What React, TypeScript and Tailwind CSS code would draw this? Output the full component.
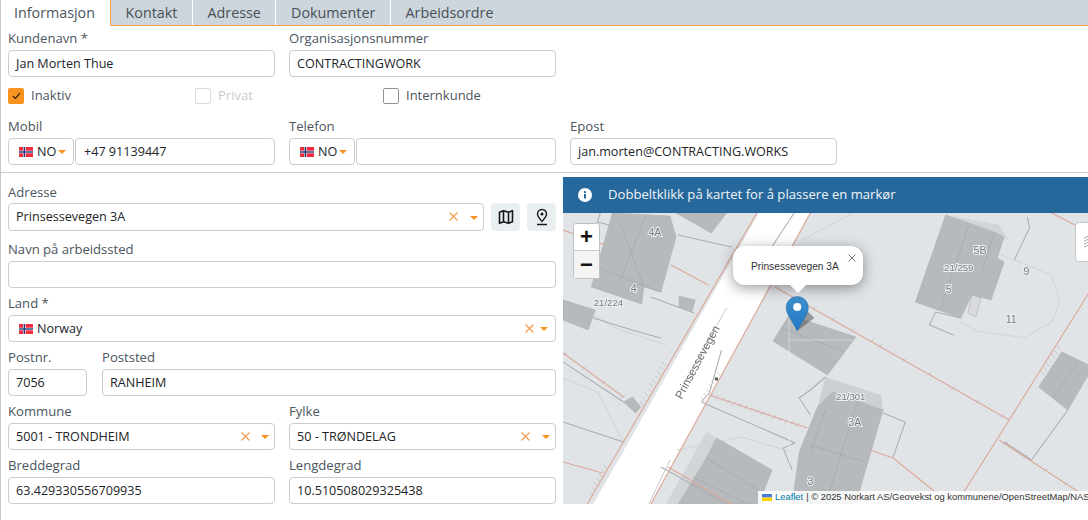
import type { ReactNode } from 'react';

const TABS = ['Kontakt', 'Adresse', 'Dokumenter', 'Arbeidsordre'];

function Flag() {
  return (
    <svg width="14" height="10" viewBox="0 0 14 10" className="shrink-0">
      <rect width="14" height="10" fill="#ef2b3d" />
      <rect x="4" width="2.600" height="10" fill="#fff" />
      <rect y="3.700" width="14" height="2.600" fill="#fff" />
      <rect x="4.600" width="1.400" height="10" fill="#1f3a7a" />
      <rect y="4.300" width="14" height="1.400" fill="#1f3a7a" />
    </svg>
  );
}

function Caret() {
  return <span className="block w-0 h-0 border-x-[4px] border-x-transparent border-t-[4px] border-t-[#f7931e]" />;
}

function Clear() {
  return (
    <svg width="9" height="9" viewBox="0 0 9 9" className="shrink-0 -mt-[2px]" stroke="#f59a4a" strokeWidth="1.100" fill="none">
      <path d="M.5.5l8 8M8.500.5l-8 8" />
    </svg>
  );
}

function Label({ children, first, className = 'pb-[3px]' }: { children: ReactNode; first?: boolean; className?: string }) {
  return (
    <div className={`${first ? 'h-6' : 'h-[27px]'} flex items-end text-[13.1px] leading-[18px] text-[#4a5560] ${className}`}>
      {children}
    </div>
  );
}

function Box({ children, className = '' }: { children?: ReactNode; className?: string }) {
  return (
    <div className={`h-[27px] flex items-center pl-[7px] pr-[5px] pt-px bg-white border border-[#ccc] rounded text-[12.6px] text-[#212529] ${className}`}>
      {children}
    </div>
  );
}

function Select({ value, flag, caretClass, className = '' }: { value: string; flag?: boolean; caretClass: string; className?: string }) {
  return (
    <Box className={`${flag ? '!pl-[10px]' : ''} ${className}`}>
      {flag && <Flag />}
      <span className={`flex-1 ${flag ? 'ml-1' : ''}`}>{value}</span>
      <Clear />
      <span className={caretClass}>
        <Caret />
      </span>
    </Box>
  );
}

function Phone({ value }: { value?: string }) {
  return (
    <div className="flex gap-px">
      <div className="w-[66px] h-[27px] flex items-center pl-[10px] pt-px bg-white border border-[#ccc] rounded text-[12.6px] text-[#212529]">
        <Flag />
        <span className="ml-1">NO</span>
        <span className="ml-[2px]">
          <Caret />
        </span>
      </div>
      <Box className="flex-1 !pl-2">{value}</Box>
    </div>
  );
}

function Check({ checked, disabled, label, className = '' }: { checked?: boolean; disabled?: boolean; label: string; className?: string }) {
  return (
    <div className={`flex items-center ${className}`}>
      {checked ? (
        <span className="w-4 h-4 rounded-[2px] bg-[#f7931e] flex items-center justify-center">
          <svg width="9" height="8" viewBox="0 0 9 8" fill="none" stroke="#2a1c08" strokeWidth="1.200">
            <path d="M1 4.200l2.300 2.300L8 1.200" />
          </svg>
        </span>
      ) : (
        <span className={`w-4 h-4 rounded-[2px] border bg-white ${disabled ? 'border-[#d8dcdf]' : 'border-[#8d959c]'}`} />
      )}
      <span className={`ml-[7px] text-[13px] ${disabled ? 'text-[#c5cacf]' : 'text-[#4a5560]'}`}>{label}</span>
    </div>
  );
}

// små tverrstreker langs eiendomsgrenser
function ticks(x1: number, y1: number, x2: number, y2: number, step = 6) {
  const len = Math.hypot(x2 - x1, y2 - y1);
  const ux = (x2 - x1) / len;
  const uy = (y2 - y1) / len;
  let d = '';
  for (let s = 2; s < len; s += step) {
    const x = x1 + ux * s;
    const y = y1 + uy * s;
    d += `M${(x - uy * 2.5 - ux).toFixed(1)} ${(y + ux * 2.5 - uy).toFixed(1)}L${(x + uy * 2.5 + ux).toFixed(1)} ${(y - ux * 2.5 + uy).toFixed(1)}`;
  }
  return d;
}

const BUILDINGS = [
  '612,213 669,216 675,237 660,292 643,287 641,304 591,287',
  '563,300 595,310 588,330 563,320',
  '678,296 694,300 691,311 678,307',
  '675,213 725,213 710,233',
  '942,215 990,232 1000,237 993,258 1000,262 987,300 968,295 957,318 912,302',
  '771,341 787,315 853,337 825,375',
  '815,407 830,392 880,410 853,504 790,504 797,452',
  '715,438 770,470 757,504 677,504 693,478 705,458',
  '1057,352 1088,367 1063,410 1034,387',
  '623,402 632,397 640,407 635,413',
];

const ORANGE = [
  'M755 213L587 504',
  'M808 213L650 504',
  'M773 287L1005 420',
  'M1047 213L1095 238',
  'M1005 420L1095 275',
  'M1005 420L960 492',
  'M995 440L1063 485L1095 505',
  'M708 395L805 428',
  'M867 450L890 458L933 493',
  'M563 353L623 397',
  'M563 462L602 473',
  'M667 467L760 522',
  'M563 230L605 245',
  'M670 265L707 285',
];

const GRAY = [
  'M677 235L730 247',
  'M650 297L693 313',
  'M593 318L638 332L660 338',
  'M563 362L623 402',
  'M563 422L623 442',
  'M700 402L793 443',
  'M1010 260L1025 228L1023 217',
  'M880 413L902 422L890 457',
  'M1000 442L1027 460L1063 410',
  'M793 443L781 448L790 470',
  'M823 377L808 390L797 398L808 415',
  'M600 213L597 222L612 226',
  'M660 467L740 512',
  'M720 350L708 393L700 402',
  'M792 213L760 262',
  'M957 318L932 312L926 325L950 335',
];

const PALE = [
  'M563 378L597 392L623 442',
  'M993 253L1047 275L1055 302L1047 322L1020 338L973 331L957 322',
  'M563 300L620 330L665 345',
  'M676 450L740 437L790 452',
  'M800 240L850 213',
];

const LABELS: [string, number, number, number?][] = [
  ['4A', 654, 236],
  ['4', 633, 292],
  ['21/224', 608, 306, 9.5],
  ['5B', 976, 254],
  ['21/259', 955, 271, 9.5],
  ['5', 945, 293],
  ['9', 1022, 275],
  ['11', 1007, 323],
  ['21/301', 848, 400, 9.5],
  ['3A', 852, 426],
  ['3', 808, 485],
];

function MapDrawing() {
  return (
    <svg viewBox="563 213 520 291" preserveAspectRatio="none" className="w-full h-full blur-[0.5px]" fontFamily="Liberation Sans, sans-serif">
      <rect x="563" y="213" width="535" height="291" fill="#e1e4e7" />
      <polygon points="757,213 808,213 650,504 593,504" fill="#fff" />
      <path d="M725 308L683 383M669 460L648 504" stroke="#b5b8bb" strokeWidth="0.8" fill="none" />
      <path d={PALE.join('')} stroke="#d0d4d7" strokeWidth="1" fill="none" />
      <polygon points="823,377 878,395 880,410 830,392 815,407" fill="#cdd0d2" />
      <polygon points="932,213 995,225 1004,240 990,232 942,215" fill="#d2d5d7" />
      <polygon points="705,432 715,438 705,458 693,478 677,504 665,504" fill="#d2d5d7" />
      {BUILDINGS.map(p => (
        <polygon key={p} points={p} fill="#b6babd" stroke="#a8acaf" strokeWidth="0.5" />
      ))}
      <polygon points="968,295 977,298 972,317 964,313" fill="#d8dadb" stroke="#a5a9ac" strokeWidth="0.5" />
      <path
        d="M620 224L643 287M591 265L660 292M645 216L620 280M965 225L937 308M990 232L978 272M779 328L842 352M823 410L808 453M855 400L823 504M808 445L862 462M705 458L757 490M693 478L745 504M1073 362L1048 398"
        stroke="#a3a7aa"
        strokeWidth="0.7"
        fill="none"
      />
      <path d={GRAY.join('')} stroke="#a9adb0" strokeWidth="1" fill="none" />
      <path d={ORANGE.join('')} stroke="#dca99b" strokeWidth="1.200" fill="none" />
      <path
        d={[
          ticks(708, 395, 795, 425),
          ticks(718, 372, 700, 402, 5),
          ticks(640, 405, 664, 362, 5),
          ticks(590, 495, 606, 465, 5),
          ticks(810, 307, 885, 350, 22),
          ticks(875, 345, 1005, 420, 28),
          ticks(563, 353, 623, 397, 24),
          ticks(1037, 375, 1056, 345, 5),
          ticks(1000, 442, 1063, 485, 24),
        ].join('')}
        stroke="#b2b6b9"
        strokeWidth="0.6"
        fill="none"
      />
      <path d="M787 213V504M787 340H850" stroke="#eef0f1" strokeWidth="0.5" fill="none" />
      <circle cx="715" cy="379" r="1.800" fill="#5b5e60" />
      <text x="696" y="366" fontSize="11.400" fill="#6d7073" textAnchor="middle" transform="rotate(-62 696 362)">
        Prinsessevegen
      </text>
      {LABELS.map(([t, x, y, s]) => (
        <text key={t} x={x} y={y} fontSize={s ?? 10.5} fill="#787b7e" textAnchor="middle" stroke="#eceeef" strokeWidth="2" paintOrder="stroke">
          {t}
        </text>
      ))}
      {/* markør */}
      <defs>
        <linearGradient id="pin" x1="0" y1="0" x2="0" y2="1">
          <stop offset="0" stopColor="#3f8fc9" />
          <stop offset="1" stopColor="#2079c7" />
        </linearGradient>
      </defs>
      <polygon points="795,331 812,318 800,306" fill="#55595c" opacity="0.55" />
      <path d="M795 331C791 322 784 315 784 307.500A11 11 0 0 1 806 307.500C806 315 799 322 795 331Z" fill="url(#pin)" stroke="#2a6fa8" strokeWidth="0.5" />
      <circle cx="795" cy="307" r="4" fill="#fff" />
    </svg>
  );
}

export default function App() {
  return (
    <div className="w-[1088px] h-[520px] overflow-hidden bg-white border-l border-[#c9c9c9] font-['Open_Sans',sans-serif]">
      {/* faner */}
      <div className="h-[26px] flex bg-[#ced6dd] border-b border-[#f5a04e] text-[14.3px] leading-[25px]">
        <div className="w-[110px] h-[26px] pl-[13px] bg-white border-r border-[#f5a04e] text-[#4a5560]">Informasjon</div>
        {TABS.map(t => (
          <div key={t} className="px-[14.6px] border-r border-white text-[#495057] last:border-r-0">
            {t}
          </div>
        ))}
      </div>

      {/* kundeinfo */}
      <div className="pl-[7px]">
        <div className="grid grid-cols-[267px_267px] gap-x-[14px]">
          <div>
            <Label first>Kundenavn *</Label>
            <Box>Jan Morten Thue</Box>
          </div>
          <div>
            <Label first>Organisasjonsnummer</Label>
            <Box>CONTRACTINGWORK</Box>
          </div>
        </div>
        <div className="flex h-4 mt-[11px]">
          <Check checked label="Inaktiv" className="w-[187px]" />
          <Check disabled label="Privat" className="w-[188px]" />
          <Check label="Internkunde" />
        </div>
        <div className="grid grid-cols-[267px_267px_267px] gap-x-[14px] mt-[7px]">
          <div>
            <Label>Mobil</Label>
            <Phone value="+47 91139447" />
          </div>
          <div>
            <Label>Telefon</Label>
            <Phone />
          </div>
          <div>
            <Label>Epost</Label>
            <Box>jan.morten@CONTRACTING.WORKS</Box>
          </div>
        </div>
      </div>

      <div className="mt-[7px] border-t border-[#ccc]" />

      <div className="flex">
        {/* adresse */}
        <div className="w-[548px] ml-[7px] shrink-0">
          <div className="pt-[3px]">
            <Label className="pb-[2px]">Adresse</Label>
            <div className="flex gap-[7px]">
              <div className="flex-1">
                <Select value="Prinsessevegen 3A" caretClass="ml-[12px]" className="!h-[28px]" />
              </div>
              <button className="w-[29px] h-[28px] flex items-center justify-center bg-[#e9eef1] rounded">
                <svg width="16" height="16" viewBox="0 0 16 16" fill="none" stroke="#14191f" strokeWidth="1.600" strokeLinejoin="round">
                  <path d="M1.500 3.200L5.500 1.700L10.500 3.200L14.500 1.700V12.800L10.500 14.300L5.500 12.800L1.500 14.300ZM5.500 1.700V12.800M10.500 3.200V14.300" />
                </svg>
              </button>
              <button className="w-[29px] h-[28px] flex items-center justify-center bg-[#e9eef1] rounded">
                <svg width="16" height="18" viewBox="0 0 16 18" fill="none" stroke="#14191f" strokeWidth="1.400">
                  <path d="M8 13.500C5.500 10.500 3.500 8.500 3.500 6A4.500 4.500 0 0 1 12.500 6C12.500 8.500 10.500 10.500 8 13.500Z" />
                  <circle cx="8" cy="6" r="1.500" fill="#14191f" stroke="none" />
                  <path d="M3 16.500H13" strokeWidth="1.500" />
                </svg>
              </button>
            </div>
          </div>
          <div className="mt-[3px]">
            <Label>Navn på arbeidssted</Label>
            <Box />
          </div>
          <Label>Land *</Label>
          <Select value="Norway" flag caretClass="ml-[6px] mr-[2px]" />
          <div className="grid grid-cols-[79px_1fr] gap-x-[15px]">
            <div>
              <Label>Postnr.</Label>
              <Box>7056</Box>
            </div>
            <div>
              <Label>Poststed</Label>
              <Box>RANHEIM</Box>
            </div>
          </div>
          <div className="grid grid-cols-[267px_267px] gap-x-[14px]">
            <div>
              <Label>Kommune</Label>
              <Select value="5001 - TRONDHEIM" caretClass="ml-[11px]" />
            </div>
            <div>
              <Label>Fylke</Label>
              <Select value="50 - TRØNDELAG" caretClass="ml-[12px]" />
            </div>
            <div>
              <Label>Breddegrad</Label>
              <Box>63.429330556709935</Box>
            </div>
            <div>
              <Label>Lengdegrad</Label>
              <Box>10.510508029325438</Box>
            </div>
          </div>
        </div>

        {/* kart */}
        <div className="w-[525px] ml-[7px] mt-1 shrink-0">
          <div className="h-9 flex items-center bg-[#26689c] text-[13.1px] text-[#f2f5f7]">
            <svg width="14" height="14" viewBox="0 0 14 14" className="ml-[15px] mr-[16px]">
              <circle cx="7" cy="7" r="7" fill="#fff" />
              <rect x="6" y="6" width="2" height="4.500" fill="#26689c" />
              <rect x="6" y="3.200" width="2" height="1.800" fill="#26689c" />
            </svg>
            Dobbeltklikk på kartet for å plassere en markør
          </div>
          <div className="relative h-[291px] overflow-hidden">
            <MapDrawing />

            <div className="absolute left-[10px] top-[10px] w-[27px] rounded-[3px] border border-[#bfc2c4] bg-white text-[#111] font-['Liberation_Sans',sans-serif] font-bold">
              <div className="h-[27px] flex items-center justify-center text-[22px] leading-none border-b border-[#ccc]">+</div>
              <div className="h-[27px] flex items-center justify-center text-[22px] leading-none bg-[#f4f4f4]">−</div>
            </div>

            <div className="absolute left-[512px] top-[9px] w-5 h-10 rounded-[4px] border border-[#c3c6c8] bg-white flex items-center pl-[8px]">
              <svg width="6" height="14" viewBox="0 0 6 14" fill="none" stroke="#a8acaf" strokeWidth="1">
                <path d="M0 3l5-2M0 6l5-2M0 9l5-2M0 12l5-2" />
              </svg>
            </div>

            {/* popup */}
            <div className="absolute left-[170px] top-[33px] w-[130px] h-[39px] rounded-xl bg-white shadow-[0_3px_14px_rgba(0,0,0,0.4)] font-['Liberation_Sans',sans-serif] text-[10.2px] text-[#333]">
              <div className="pt-[14px] pl-[18px] leading-[13px]">Prinsessevegen 3A</div>
              <svg width="8" height="8" viewBox="0 0 8 8" stroke="#666" strokeWidth="0.9" className="absolute right-[7px] top-[8px]">
                <path d="M.5.5l7 7M7.500.5l-7 7" />
              </svg>
              <span className="absolute left-[57px] top-[39px] w-0 h-0 border-x-[8px] border-x-transparent border-t-[8px] border-t-white" />
            </div>

            {/* attribusjon */}
            <div className="absolute right-0 bottom-0 w-[330px] h-[13px] pl-[4px] flex items-center overflow-hidden whitespace-nowrap bg-white/85 font-['Liberation_Sans',sans-serif] text-[9.4px] text-[#333]">
              <svg width="10" height="7" viewBox="0 0 10 7" className="mr-[3px] shrink-0">
                <rect width="10" height="3.500" fill="#4c7be1" />
                <rect y="3.500" width="10" height="3.500" fill="#ffd500" />
              </svg>
              <span className="text-[#0078a8]">Leaflet</span>
              <span className="ml-[3px]">| © 2025 Norkart AS/Geovekst og kommunene/OpenStreetMap/NAS</span>
            </div>
          </div>
        </div>
      </div>
    </div>
  );
}
